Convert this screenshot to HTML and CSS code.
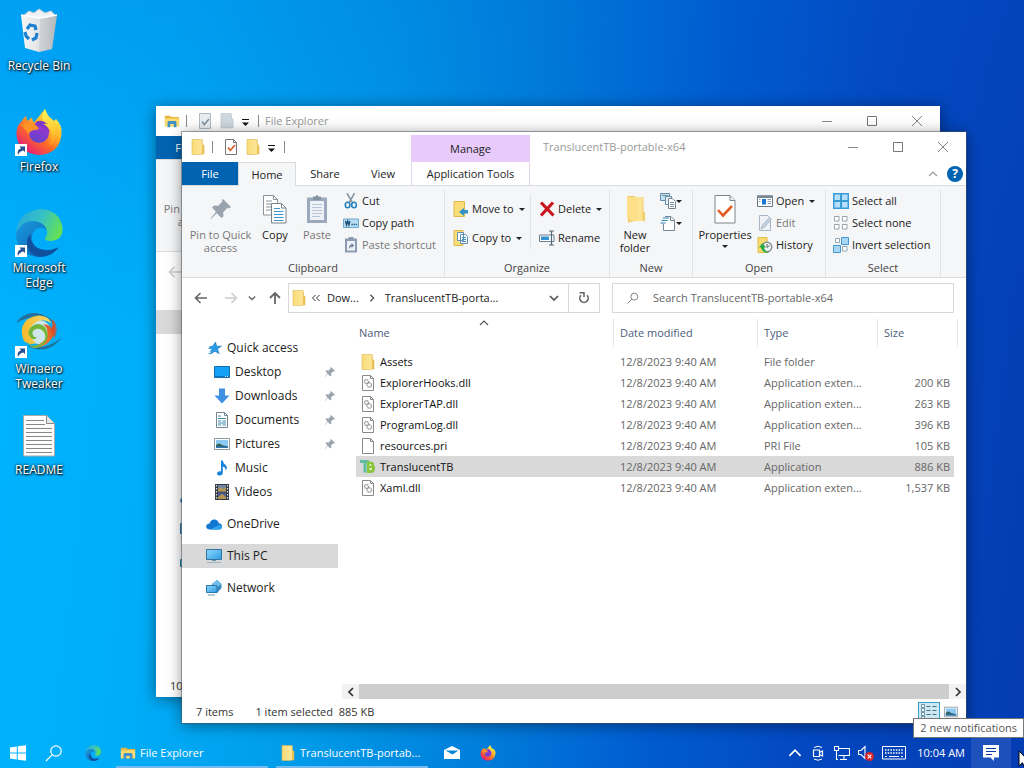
FILE: index.html
```
<!DOCTYPE html>
<html lang="en">
<head>
<meta charset="utf-8">
<title>Desktop</title>
<link rel="stylesheet" href="styles.css">
</head>
<body>
<svg class="sprite" aria-hidden="true">
  <defs>
    <linearGradient id="gFolder" x1="0" y1="0" x2="1" y2="0"><stop offset="0" stop-color="#f8db78"/><stop offset=".75" stop-color="#fde596"/><stop offset="1" stop-color="#e9c45c"/></linearGradient>
    <linearGradient id="gFox" x1=".85" y1=".1" x2=".2" y2=".95"><stop offset="0" stop-color="#fff44f"/><stop offset=".35" stop-color="#ffb02a"/><stop offset=".6" stop-color="#ff6a26"/><stop offset="1" stop-color="#e3197b"/></linearGradient>
    <linearGradient id="gOrb" x1=".7" y1="0" x2=".3" y2="1"><stop offset="0" stop-color="#a932d0"/><stop offset="1" stop-color="#5c46cc"/></linearGradient>
    <linearGradient id="gFlame" x1=".5" y1="0" x2=".7" y2="1"><stop offset="0" stop-color="#fff157"/><stop offset=".6" stop-color="#ffc72d"/><stop offset="1" stop-color="#ff8a20"/></linearGradient>
    <linearGradient id="gEdgeTop" x1="0" y1=".3" x2="1" y2=".6"><stop offset="0" stop-color="#2ba9dc"/><stop offset=".5" stop-color="#35c1c4"/><stop offset="1" stop-color="#66e24e"/></linearGradient>
    <linearGradient id="gEdgeLow" x1="0" y1="0" x2="1" y2="1"><stop offset="0" stop-color="#1a9ade"/><stop offset="1" stop-color="#0a5cb0"/></linearGradient>
    <linearGradient id="gScreen" x1="0" y1="0" x2="1" y2="1"><stop offset="0" stop-color="#8ed8fb"/><stop offset="1" stop-color="#2d9be6"/></linearGradient>
    <linearGradient id="gBin" x1="0" y1="0" x2="1" y2="0"><stop offset="0" stop-color="#f6f7f8"/><stop offset=".6" stop-color="#dde0e2"/><stop offset="1" stop-color="#b4b9bd"/></linearGradient>
    <linearGradient id="gSwirl" x1="0" y1="0" x2="1" y2="0"><stop offset="0" stop-color="#f7b92c"/><stop offset="1" stop-color="#f3d86a"/></linearGradient>
    <linearGradient id="gSwirlHot" x1="1" y1="0" x2="0" y2="1"><stop offset="0" stop-color="#d9401c"/><stop offset="1" stop-color="#f7a440"/></linearGradient>
  </defs>
  <symbol id="folder" viewBox="0 0 16 16"><path d="M2 .5h10l.5 1v4l1.500.8V15H12l-.6.5H2z" fill="url(#gFolder)" stroke="#dcb955" stroke-width=".6"/><path d="M12.500 6l1.500.8V15h-2z" fill="#e8bf4d"/></symbol>
  <symbol id="ghost-folder" viewBox="0 0 16 16"><path d="M2 .5h10l.5 1v4l1.500.8V15H2z" fill="#cfd8df" stroke="#b5c0c9" stroke-width=".6"/></symbol>
  <symbol id="explorer" viewBox="0 0 18 16"><path d="M1 2h6l1.500 1.500H17V14H1z" fill="#e7b540"/><path d="M1 5h16v9H1z" fill="#fbdc72"/><path d="M4 15V9.500Q4 8 5.500 8h7Q14 8 14 9.500V15h-3v-3.500H7V15z" fill="#4092c8"/></symbol>
  <symbol id="check-page" viewBox="0 0 14 16"><path d="M1.500.5h8l3 3v12h-11z" fill="#fff" stroke="#777"/><path d="M9.500.5v3h3" fill="none" stroke="#777"/><path d="M4 8.500l2.300 3L11 6" fill="none" stroke="#d9622b" stroke-width="1.700"/></symbol>
  <symbol id="ghost-check" viewBox="0 0 14 16"><path d="M1.500.5h11v15h-11z" fill="#e8edf2" stroke="#b0bac2"/><path d="M4 8.500l2.300 3L11 6" fill="none" stroke="#7e8d9f" stroke-width="1.500"/></symbol>
  <symbol id="bar-menu" viewBox="0 0 9 9"><path d="M1 1.500h7" stroke="#111"/><path d="M1 4.500h7L4.500 8z" fill="#111"/></symbol>
  <symbol id="min" viewBox="0 0 12 12"><path d="M1 6.500h10" stroke="#888"/></symbol>
  <symbol id="max" viewBox="0 0 12 12"><path d="M1.500 1.500h9v9h-9z" fill="none" stroke="#777"/></symbol>
  <symbol id="close" viewBox="0 0 12 12"><path d="M1 1l10 10M11 1L1 11" stroke="#808080" fill="none"/></symbol>
  <symbol id="pin" viewBox="0 0 24 24"><path d="M14 2l8 8-2 1.500-1.500-.8-4.300 4.500.3 4-2 1.800-4.800-4.800L2 22l-.4-.6L7 14.800 3 10.500 5 8.600l4.200.2 4.300-4.600-.8-1.200z" fill="#9aa4af"/></symbol>
  <symbol id="copy" viewBox="0 0 26 30"><path d="M1.500 1.500h10l4 4V21h-14z" fill="#fff" stroke="#8b949c"/><path d="M11.500 1.500v4h4M4 7h6M4 10h8M4 13h8M4 16h8" fill="none" stroke="#8b949c"/><path d="M9.500 9.500h10l4.500 4.500v15h-14.500z" fill="#fff" stroke="#78838c"/><path d="M19.500 9.500V14H24" fill="none" stroke="#78838c"/><path d="M12 14.500h6M12 17.500h9.500M12 20.500h9.500M12 23.500h9.500M12 26.500h9.500" stroke="#3d94cf"/></symbol>
  <symbol id="paste" viewBox="0 0 22 30"><path d="M1 3.500h20V29H1z" fill="#9ba9bd"/><path d="M4 7h14v19H4z" fill="#edf2f8"/><path d="M7 2.500h2.500Q11-.5 12.500 2.500H15V6H7z" fill="#8492a4"/><path d="M6 10.500h10M6 13.500h10M6 16.500h10M6 19.500h10M6 22.500h8" stroke="#bac6d4"/></symbol>
  <symbol id="cut" viewBox="0 0 16 16"><path d="M4 0l5.500 10M11.500 0L6 10" stroke="#8b98a2" stroke-width="1.600"/><ellipse cx="4.600" cy="12" rx="2.300" ry="2.800" fill="none" stroke="#2583bd" stroke-width="1.600"/><ellipse cx="11" cy="12" rx="2.300" ry="2.800" fill="none" stroke="#2583bd" stroke-width="1.600"/></symbol>
  <symbol id="copy-path" viewBox="0 0 16 16"><path d="M.5 4h15v8.500H.5z" fill="#b7def5" stroke="#6ca9cf"/><path d="M2.500 6l1 4 1.200-4 1.200 4 1-4" fill="none" stroke="#174d73" stroke-width="1.300"/><path d="M8.500 9.500h1.200M10.700 9.500h1.200M12.900 9.500h1.200" stroke="#174d73" stroke-width="1.400"/></symbol>
  <symbol id="paste-shortcut" viewBox="0 0 16 16"><path d="M2 1.500h12V15.500H2z" fill="#8d9bb0"/><path d="M4 4h8v9.500H4z" fill="#eef2f8"/><path d="M5.500 0h5v3h-5z" fill="#8d9bb0"/><path d="M6 12q-.5-4 2.500-4.500V6l2.700 2.500L8.500 11V9.500Q7 9.500 6 12z" fill="#6e809a"/></symbol>
  <symbol id="move" viewBox="0 0 16 16"><path d="M1 .5h10.500V15.500H1z" fill="#fbdd77" stroke="#e0b94e"/><path d="M15 9h-4V6.800L6 11l5 4v-2.500h4z" fill="#3391c6"/></symbol>
  <symbol id="copy-to" viewBox="0 0 16 16"><path d="M1 .5h9V15.500H1z" fill="#fbdd77" stroke="#e0b94e"/><path d="M4.500 2.500h6v8h-6zM7.500 4.500h5l2 2v7h-7z" fill="#fff" stroke="#5d91b5"/><path d="M9 7.500h4M9 9.500h4M9 11.500h4" stroke="#438fc2"/></symbol>
  <symbol id="delete" viewBox="0 0 16 16"><path d="M2 1.500l12.500 13M14 1.500l-12 13" stroke="#c9151e" stroke-width="3.200"/></symbol>
  <symbol id="rename" viewBox="0 0 16 16"><path d="M.5 5h14.500v6.500H.5z" fill="#fff" stroke="#6d7f8c"/><path d="M2 6.500h8v3.500H2z" fill="#3593d3"/><path d="M10 1h5M12.500 1v14M10 15h5" stroke="#526879" stroke-width="1.200"/></symbol>
  <symbol id="new-folder" viewBox="0 0 22 30"><path d="M3 2h8v25l-7 1.500z" fill="#edc766"/><path d="M5 3h14.500v14l1.500 2v8H5z" fill="url(#gFolder)"/><path d="M3 2l7 3v21l-7-2z" fill="#ffe08a"/></symbol>
  <symbol id="new-item" viewBox="0 0 16 16"><path d="M.5.500h9v7h-9z" fill="#c2e2f3" stroke="#668da7"/><path d="M5.500 3.500h6v8h-6z" fill="#e8f3f9" stroke="#668da7"/><path d="M8.500 5.500h4l3 3v7h-7z" fill="#fff" stroke="#728493"/><path d="M10 9.500h4M10 11.500h4M10 13.500h4M2 2.500h6" stroke="#7893a4"/></symbol>
  <symbol id="easy-access" viewBox="0 0 16 16"><path d="M5 1.500h6l3.500 3.500v10.500H3.500V9" fill="#fff" stroke="#748899"/><path d="M10.500 1.500v4h4" fill="none" stroke="#748899"/><path d="M3 3h6M1.500 5.500h6M.5 8h5" stroke="#2c80b8" stroke-width="1.200"/></symbol>
  <symbol id="properties" viewBox="0 0 22 30"><path d="M1 1.500h15l5 5V29H1z" fill="#fff" stroke="#7b858d"/><path d="M16 1.500v5h5" fill="#eee" stroke="#7b858d"/><path d="M4 16l5 5.500L18 12" fill="none" stroke="#e15d25" stroke-width="2.600"/></symbol>
  <symbol id="open" viewBox="0 0 16 16"><path d="M.5 3h15v10.500H.5z" fill="#fff" stroke="#687984"/><path d="M0 2.500h16V5H0z" fill="#758794"/><path d="M5 6h4v5.500H5z" fill="#1874cf"/><path d="M10.500 6.500H14M10.500 8.500H14M10.500 10.500H14M2 6.500h1.500M2 8.500h1.500" stroke="#8c9caa"/></symbol>
  <symbol id="edit" viewBox="0 0 16 16"><path d="M2.500.500h8l3 3v12h-11z" fill="#eef2f7" stroke="#aab6c4"/><path d="M4 14l1.500-4 7-7.500 2 2-7 7.500z" fill="#c7d3e1" stroke="#93a5b8" stroke-width=".7"/></symbol>
  <symbol id="history" viewBox="0 0 16 16"><path d="M1 .5h9V15.500H1z" fill="#f8dc70" stroke="#e1bd4c"/><circle cx="10" cy="10" r="4.800" fill="#edf0f0" stroke="#708287" stroke-width="1.200"/><path d="M10 7v3.500l2.500-2" fill="none" stroke="#56646b"/><path d="M12.500 15.500q-7.500 1-8.500-5H2L5.500 6 9 10.500H7q.5 3.800 5.500 5z" fill="#28a745"/></symbol>
  <symbol id="select-all" viewBox="0 0 16 16"><path d="M0 0h16v16H0z" fill="#3a9bd9"/><path d="M1.500 1.500h5.500v5.500H1.500zM9 1.500h5.500v5.500H9zM1.500 9h5.500v5.500H1.500zM9 9h5.500v5.500H9z" fill="#b5e0fa"/></symbol>
  <symbol id="select-none" viewBox="0 0 16 16"><path d="M1.500 1.500h4.500v4.500H1.500zM9.500 1.500h4.500v4.500H9.500zM1.500 9.500h4.500v4.500H1.500zM9.500 9.500h4.500v4.500H9.500z" fill="#fff" stroke="#98a3ab"/></symbol>
  <symbol id="select-inv" viewBox="0 0 16 16"><path d="M2.500 1.500h4v4h-4zM9.500 9.500h4.500v4.500H9.500z" fill="#fff" stroke="#91a6b5"/><path d="M8.500.5h7v7h-7zM.5 8.500h7v7h-7z" fill="#a8d6f6" stroke="#4597cd"/></symbol>
  <symbol id="arrow-left" viewBox="0 0 14 14"><path d="M13 7H2M6.500 2L1.500 7l5 5" fill="none" stroke="currentColor" stroke-width="1.600"/></symbol>
  <symbol id="arrow-right" viewBox="0 0 14 14"><path d="M1 7h11M7.500 2l5 5-5 5" fill="none" stroke="currentColor" stroke-width="1.600"/></symbol>
  <symbol id="arrow-up" viewBox="0 0 14 14"><path d="M7 13V2M2 7l5-5 5 5" fill="none" stroke="currentColor" stroke-width="1.800"/></symbol>
  <symbol id="chev-down" viewBox="0 0 10 10"><path d="M1 3l4 4 4-4" fill="none" stroke="currentColor" stroke-width="1.700"/></symbol>
  <symbol id="chev-up" viewBox="0 0 10 10"><path d="M1 7l4-4 4 4" fill="none" stroke="currentColor" stroke-width="1.200"/></symbol>
  <symbol id="chev-right" viewBox="0 0 10 10"><path d="M3 1l4 4-4 4" fill="none" stroke="currentColor" stroke-width="1.700"/></symbol>
  <symbol id="chev-left" viewBox="0 0 10 10"><path d="M7 1L3 5l4 4" fill="none" stroke="currentColor" stroke-width="1.700"/></symbol>
  <symbol id="chevs" viewBox="0 0 10 10"><path d="M4.500 2l-3 3 3 3M8.500 2l-3 3 3 3" fill="none" stroke="#333"/></symbol>
  <symbol id="refresh" viewBox="0 0 14 14"><path d="M10 4.200A4.200 4.200 0 1 1 4 4.200" fill="none" stroke="#666" stroke-width="1.600"/><path d="M2.500 1.800H7V6.300" fill="none" stroke="#666" stroke-width="1.500"/></symbol>
  <symbol id="search" viewBox="0 0 18 18"><circle cx="11" cy="7" r="5.200" fill="none" stroke="currentColor" stroke-width="1.200"/><path d="M7.300 10.700L1 17" stroke="currentColor" stroke-width="1.200"/></symbol>
  <symbol id="star" viewBox="0 0 16 16"><path d="M9.500 2l1.200 4.300 4.800-.2-4 2.900 1.600 4.700-4.100-2.500-4.500 2.700 1.400-4.600L3.300 7l3.500-.9z" fill="#2b9be8" stroke="#1579bd" stroke-width=".6"/><path d="M2.500 8.500h3M3.500 11h2M2.500 13.500h2" stroke="#2b9be8"/></symbol>
  <symbol id="desk" viewBox="0 0 16 16"><path d="M.5 2.500h15v11H.5z" fill="#13a1f5" stroke="#1271b5"/><path d="M1 12.500h14" stroke="#0872bd"/><path d="M11 12.500h1M13 12.500h1" stroke="#d5efff"/></symbol>
  <symbol id="down" viewBox="0 0 16 16"><path d="M5 .5h6v7h4.500L8 15.500.5 7.500H5z" fill="#3e90e0"/></symbol>
  <symbol id="doc" viewBox="0 0 16 16"><path d="M2.500.500h8l3 3v12h-11z" fill="#fff" stroke="#76858f"/><path d="M4 4h3M4 6.500h8M4 9h3M8.500 9H12M4 11h8M4 13h3M8.500 13H12" stroke="#3d8fae" stroke-width="1.200"/><path d="M10.500.5v3h3" fill="none" stroke="#76858f"/></symbol>
  <symbol id="pics" viewBox="0 0 16 16"><path d="M.5 2.500h15v11H.5z" fill="#fff" stroke="#8c989f"/><path d="M2 4h12v8H2z" fill="#8ccaf3"/><path d="M2 9q3-3 6 0l6 1.500V12H2z" fill="#36605b"/><path d="M2 10.500h12V12H2z" fill="#2c77b8"/></symbol>
  <symbol id="music" viewBox="0 0 16 16"><path d="M7 .5h1.800Q9 3.500 12 5.500q2 2.200-.5 5 .3-3.500-2.700-4v6.300Q8.500 15.500 6 15.500q-3 0-3-2t3-2.300h1z" fill="#1883dc"/></symbol>
  <symbol id="video" viewBox="0 0 16 16"><path d="M1 0h14v16H1z" fill="#333944"/><path d="M4 1h8v6.500H4z" fill="#6f85a8"/><path d="M4 8.500h8V15H4z" fill="#4c608e"/><path d="M4 5l3-2 2 2 3-2v4.500H4zM4 13l4-3 4 3v2H4z" fill="#b59650"/><path d="M2.500 1v14M13.500 1v14" stroke="#dfe4ea" stroke-width="1.200" stroke-dasharray="1.500 1.500"/></symbol>
  <symbol id="cloud" viewBox="0 0 16 16"><path d="M3.500 13.500Q0 13 .2 10.300.8 7.500 3.500 7.500 5 3 9 3.500q3 .5 3.800 3.700 3.200.3 3.200 3.300t-3 3z" fill="#1277d0"/><path d="M4 13.500L13 9q3 .3 3 2.200-.3 2.300-3 2.300z" fill="#2da4f0"/></symbol>
  <symbol id="pc" viewBox="0 0 16 16"><path d="M.5 1.500h15v10H.5z" fill="url(#gScreen)" stroke="#33739d"/><path d="M1 14.500h14" stroke="#9bb4c5"/><path d="M6 12.500h4" stroke="#6e8b9e"/></symbol>
  <symbol id="net" viewBox="0 0 16 16"><path d="M11 0l4.500 4v4L11 13 6 9V4z" fill="#3688bd"/><path d="M11 0l4.500 4-4 3L6 4z" fill="#6ec0ea"/><path d="M.5 5.500h10.500v7H.5z" fill="url(#gScreen)" stroke="#2c77a5"/><path d="M2 15h7" stroke="#6e95ae"/></symbol>
  <symbol id="dll" viewBox="0 0 14 16"><path d="M1.500.5h8l3 3v12h-11z" fill="#fff" stroke="#8a8a8a"/><path d="M9.500.5v3h3" fill="none" stroke="#8a8a8a"/><circle cx="5.500" cy="6.500" r="2" fill="none" stroke="#8b9196" stroke-width="1.300" stroke-dasharray="1.300 .5"/><circle cx="8.300" cy="10" r="2.200" fill="none" stroke="#8b9196" stroke-width="1.300" stroke-dasharray="1.300 .5"/></symbol>
  <symbol id="blank" viewBox="0 0 14 16"><path d="M1.500.5h8l3 3v12h-11z" fill="#fff" stroke="#8a8a8a"/><path d="M9.500.5v3h3" fill="none" stroke="#8a8a8a"/></symbol>
  <symbol id="ttb" viewBox="0 0 16 16"><path d="M0 1h9v3H6.500v9.500h-3V4H0z" fill="#61bea1"/><path d="M7 2.500h4q3.500.5 3 3.700 1.800 1.300 1 4.300-1 3.500-4.500 3.500H7z" fill="#8bc53f"/><path d="M9.500 5h1.700v1.800H9.500zM9.500 9h2.200v2H9.500z" fill="#e7f6cf"/></symbol>
  <symbol id="fox" viewBox="0 0 48 48"><path d="M7 13q1-3 4-5 0 3 2 5 2-3 4-3.500 0 3 2 5L30 1q2 7 7 10l2 2 2-2q6 6 5.500 14-1 21-23 22Q3 45 1.500 27 1 18 7 13z" fill="url(#gFox)"/><path d="M30 1q2 7 8 12 8 9 8 14-2-5-6-8 3 15-6 19 7-13-4-22-5-5 0-15z" fill="url(#gFlame)"/><circle cx="24" cy="25" r="10" fill="url(#gOrb)"/><path d="M6 17q5-4 12-2l6 5q-1 2-5 2-5 1-5 5-3-5-8-10z" fill="#ff9226"/><path d="M20 15q5-5 13 1-3-1-5 0 6 3 7 9-4-6-12-7z" fill="#7b37c8"/></symbol>
  <symbol id="edge" viewBox="0 0 48 48"><path d="M1 25Q2 3 25 0q20 1 22.500 19Q48 31 36 32q-7 0-6-3 5-6-1-12Q17 8 1 25z" fill="url(#gEdgeTop)"/><path d="M1 24Q7 11 19 12q10 1 13 9-7-5-12 0-6 6-1 15 8 11 22 3-7 9-17 9Q1 46 1 24z" fill="url(#gEdgeLow)"/><path d="M16 25q-2 7 5 13 9 6 21 1l2-1q-7 10-20 10-12-4-12-14 0-6 4-9z" fill="#10509e"/></symbol>
  <symbol id="swirl" viewBox="0 0 48 48"><path d="M1 13Q10 0 26 4q9 3 14 10Q22 1 1 13zM47 27Q37 42 21 39q-5-1-9-4 18 7 35-8z" fill="#22719c"/><circle cx="24" cy="22" r="12" fill="#cfe6ea"/><path d="M36 8q8 12-1 23-9 9-20 6 12-2 16-9 4-9-3-14 6 1 8 6 3-5 0-12z" fill="url(#gSwirlHot)"/><path d="M38 9q7 10 1 20-2-10-9-15 5 1 7 4 2-4 1-9z" fill="#dd481f" opacity=".7"/><path d="M9 31Q3 17 13 9q9-6 18-2 4 2 5 6-8-5-15-1-8 5-5 14 1 4 5 7-7 3-12-2z" fill="url(#gSwirl)"/><path d="M10 30q6 8 14 5 8-4 6-11-3-6-9-5-5 2-3 6 1 3 4 2-2 4-6 1-5-5 0-11 7-6 14 0 6 9-1 17-10 9-19-4z" fill="#72b53b"/></symbol>
  <symbol id="bin" viewBox="0 0 48 48"><path d="M8 9l6-5 5 2 5-4 6 4 6-2 5 5-6 4H11z" fill="#eef1f3" stroke="#c4c9cd"/><path d="M6 8l19 3 17-3-5 34-13 3-14-4z" fill="url(#gBin)"/><path d="M25 11l17-3-5 34-13 3z" fill="#aeb5ba" opacity=".35"/><path d="M6 8l19 3 17-3" fill="none" stroke="#fff" stroke-width="1.500"/><path d="M12 22l3-4 5 1 1 4M22 26l-1 5-4 2M14 32l-3-3-1-4" fill="none" stroke="#1c7fd0" stroke-width="3.200"/></symbol>
  <symbol id="readme" viewBox="0 0 48 48"><path d="M8.500 4.500h23l8 8v32.500h-31z" fill="#fdfdfd" stroke="#aaa"/><path d="M31.500 4.500v8h8" fill="#e7e7e7" stroke="#888"/><path d="M11 9.500h18M11 13.500h19M11 17.500h26M11 21.500h26M11 25.500h26M11 29.500h26M11 33.500h26M11 37.500h26M11 41.500h26" stroke="#888"/></symbol>
  <symbol id="shortcut" viewBox="0 0 12 12"><path d="M0 0h12v12H0z" fill="#fff"/><path d="M3 11Q1.500 5.500 6 4.500L4.500 2.500H10v5.500L8.300 6.500Q4.500 7 3 11z" fill="#255293"/></symbol>
  <symbol id="win" viewBox="0 0 16 16"><path d="M0 2.500l6.800-1v6H0zM7.800 1.300L16 .200v7.300H7.800zM0 8.500h6.800v6L0 13.500zM7.800 8.500H16v7.300l-8.200-1.100z" fill="#fff"/></symbol>
  <symbol id="mail" viewBox="0 0 16 16"><path d="M0 5l8-4 8 4v9H0z" fill="#fff"/><path d="M1.500 5.500h13L8.500 9.500z" fill="#0786d7"/></symbol>
  <symbol id="meet" viewBox="0 0 16 16"><path d="M3.500 5h6v6.500h-6zM9.500 7.500l3-1.500v5l-3-1.500" fill="none" stroke="#fff" stroke-width="1.200"/><path d="M4 2.500q4-2.500 8 0M4 14q4 2.500 8 0" fill="none" stroke="#fff"/></symbol>
  <symbol id="lan" viewBox="0 0 16 16"><path d="M4.500 3.500h11v7h-11M10 10.500v4M6 14.500h7M.5 1.500h4v4h-4zM2.500 5.500v9H4" fill="none" stroke="#fff" stroke-width="1.100"/></symbol>
  <symbol id="mute" viewBox="0 0 16 16"><path d="M.5 5.500h2.500l4-4v12l-4-4H.5z" fill="none" stroke="#fff" stroke-width="1.100"/><circle cx="11.500" cy="11.500" r="4.500" fill="#d7222e"/><path d="M9.700 9.700l3.600 3.600M13.300 9.700l-3.600 3.600" stroke="#fff" stroke-width="1.200"/></symbol>
  <symbol id="keys" viewBox="0 0 24 14"><path d="M.5.500h23v12.500H.5z" fill="none" stroke="#fff"/><path d="M3 4h18M3 7h18" stroke="#fff" stroke-width="1.400" stroke-dasharray="1.500 1.200"/><path d="M3 10.500h2M7 10.500h10M19 10.500h2" stroke="#fff"/></symbol>
  <symbol id="note" viewBox="0 0 16 16"><path d="M0 0h16v12.500h-5V16l-3.500-3.500H0z" fill="#fff"/><path d="M3 3.500h10M3 6.500h10M3 9.500h6" stroke="#0a3da5" stroke-width="1.200"/></symbol>
  <symbol id="details" viewBox="0 0 16 16"><path d="M.5.500h3v3h-3zM.5 4.500h3v3h-3zM.5 8.500h3v3h-3zM.5 12.500h3v3h-3z" fill="#fff" stroke="#6b91a4"/><path d="M5.500 2.500h4M11.500 2.500h4M5.500 6.500h4M11.500 6.500h4M5.500 10.500h4M11.500 10.500h4M5.500 14.500h4M11.500 14.500h4" stroke="#466d82"/></symbol>
</svg>

<main class="desktop">
  <nav class="shortcuts" aria-label="Desktop icons">
    <a class="shortcut" href="#bin"><span class="art"><svg><use href="#bin"/></svg></span>Recycle Bin</a>
    <a class="shortcut" href="#fox"><span class="art"><svg><use href="#fox"/></svg><svg class="badge"><use href="#shortcut"/></svg></span>Firefox</a>
    <a class="shortcut" href="#edge"><span class="art"><svg><use href="#edge"/></svg><svg class="badge"><use href="#shortcut"/></svg></span>Microsoft Edge</a>
    <a class="shortcut" href="#swirl"><span class="art"><svg><use href="#swirl"/></svg><svg class="badge"><use href="#shortcut"/></svg></span>Winaero Tweaker</a>
    <a class="shortcut" href="#readme"><span class="art"><svg><use href="#readme"/></svg></span>README</a>
  </nav>

  <section class="window window-back" aria-label="File Explorer">
    <header class="titlebar">
      <div class="quick">
        <svg class="i16"><use href="#explorer"/></svg><span class="bar"></span>
        <svg class="i16"><use href="#ghost-check"/></svg><svg class="i16"><use href="#ghost-folder"/></svg><svg class="i9"><use href="#bar-menu"/></svg><span class="bar"></span>
      </div>
      <h2 class="title">File Explorer</h2>
      <div class="controls">
        <button aria-label="Minimize"><svg><use href="#min"/></svg></button><button aria-label="Maximize"><svg><use href="#max"/></svg></button><button aria-label="Close"><svg><use href="#close"/></svg></button>
      </div>
    </header>
    <div class="tabs"><button class="tab file">File</button></div>
    <div class="ribbon"><div class="group"><div class="tools"><button class="big dim pinbig"><svg class="i24"></svg><span>Pin to Quick access</span></button></div></div></div>
    <div class="address"><button class="ar faint" aria-label="Back"><svg class="i14"><use href="#arrow-left"/></svg></button></div>
    <div class="content">
      <div class="tree">
        <div class="node current"></div>
        <div class="spacer"></div>
        <div class="node"><svg class="i16"><use href="#cloud"/></svg></div>
        <div class="node top"><svg class="i16"><use href="#pc"/></svg></div>
        <div class="node top"><svg class="i16"><use href="#net"/></svg></div>
      </div>
    </div>
    <footer class="status"><span>10 items</span></footer>
  </section>

  <section class="window window-front" aria-label="TranslucentTB-portable-x64">
    <header class="titlebar">
      <div class="quick">
        <svg class="i16"><use href="#folder"/></svg><span class="bar"></span>
        <svg class="i16"><use href="#check-page"/></svg><svg class="i16"><use href="#folder"/></svg><svg class="i9"><use href="#bar-menu"/></svg><span class="bar"></span>
      </div>
      <div class="manage">Manage</div>
      <h2 class="title">TranslucentTB-portable-x64</h2>
      <div class="controls">
        <button aria-label="Minimize"><svg><use href="#min"/></svg></button><button aria-label="Maximize"><svg><use href="#max"/></svg></button><button aria-label="Close"><svg><use href="#close"/></svg></button>
      </div>
    </header>
    <div class="tabs">
      <button class="tab file">File</button><button class="tab active">Home</button><button class="tab">Share</button><button class="tab">View</button><button class="tab context">Application Tools</button>
      <div class="tab-end"><button class="collapse" aria-label="Collapse ribbon"><svg class="i10"><use href="#chev-up"/></svg></button><button class="help">?</button></div>
    </div>
    <div class="ribbon">
      <div class="group g-clip">
        <div class="tools">
          <button class="big dim pinbig"><svg class="i24"><use href="#pin"/></svg><span>Pin to Quick access</span></button>
          <button class="big copybig"><svg class="tall"><use href="#copy"/></svg><span>Copy</span></button>
          <button class="big dim pastebig"><svg class="tall"><use href="#paste"/></svg><span>Paste</span></button>
          <div class="stack">
            <button class="small"><svg class="i16"><use href="#cut"/></svg>Cut</button>
            <button class="small"><svg class="i16"><use href="#copy-path"/></svg>Copy path</button>
            <button class="small dim"><svg class="i16"><use href="#paste-shortcut"/></svg>Paste shortcut</button>
          </div>
        </div>
        <div class="caption">Clipboard</div>
      </div>
      <div class="group g-org">
        <div class="tools">
          <div class="stack wide first">
            <button class="small drop"><svg class="i16"><use href="#move"/></svg>Move to</button>
            <button class="small drop"><svg class="i16"><use href="#copy-to"/></svg>Copy to</button>
          </div>
          <div class="stack wide">
            <button class="small drop"><svg class="i16"><use href="#delete"/></svg>Delete</button>
            <button class="small"><svg class="i16"><use href="#rename"/></svg>Rename</button>
          </div>
        </div>
        <div class="caption">Organize</div>
      </div>
      <div class="group g-new">
        <div class="tools">
          <button class="big newbig"><svg class="tall"><use href="#new-folder"/></svg><span>New folder</span></button>
          <div class="stack">
            <button class="small drop bare" aria-label="New item"><svg class="i16"><use href="#new-item"/></svg></button>
            <button class="small drop bare" aria-label="Easy access"><svg class="i16"><use href="#easy-access"/></svg></button>
          </div>
        </div>
        <div class="caption">New</div>
      </div>
      <div class="group g-open">
        <div class="tools">
          <button class="big propbig drop"><svg class="tall"><use href="#properties"/></svg><span>Properties</span></button>
          <div class="stack">
            <button class="small drop"><svg class="i16"><use href="#open"/></svg>Open</button>
            <button class="small dim"><svg class="i16"><use href="#edit"/></svg>Edit</button>
            <button class="small"><svg class="i16"><use href="#history"/></svg>History</button>
          </div>
        </div>
        <div class="caption">Open</div>
      </div>
      <div class="group g-sel">
        <div class="tools">
          <div class="stack">
            <button class="small"><svg class="i16"><use href="#select-all"/></svg>Select all</button>
            <button class="small"><svg class="i16"><use href="#select-none"/></svg>Select none</button>
            <button class="small"><svg class="i16"><use href="#select-inv"/></svg>Invert selection</button>
          </div>
        </div>
        <div class="caption">Select</div>
      </div>
    </div>
    <div class="address">
      <button class="ar" aria-label="Back"><svg class="i14"><use href="#arrow-left"/></svg></button>
      <button class="ar faint" aria-label="Forward"><svg class="i14"><use href="#arrow-right"/></svg></button>
      <button class="ar thin" aria-label="Recent"><svg class="i8"><use href="#chev-down"/></svg></button>
      <button class="ar up" aria-label="Up"><svg class="i14"><use href="#arrow-up"/></svg></button>
      <div class="path">
        <svg class="i16"><use href="#folder"/></svg>
        <svg class="i10"><use href="#chevs"/></svg>
        <button class="crumb">Dow...</button>
        <svg class="i8"><use href="#chev-right"/></svg>
        <button class="crumb">TranslucentTB-porta...</button>
        <button class="history" aria-label="Previous locations"><svg class="i10"><use href="#chev-down"/></svg></button>
        <button class="refresh" aria-label="Refresh"><svg class="i14"><use href="#refresh"/></svg></button>
      </div>
      <label class="find"><svg class="i12"><use href="#search"/></svg><input type="text" aria-label="Search" placeholder="Search TranslucentTB-portable-x64"></label>
    </div>
    <div class="content">
      <nav class="tree" aria-label="Folders">
        <a class="node" href="#q"><svg class="i16"><use href="#star"/></svg>Quick access</a>
        <a class="node sub" href="#d"><svg class="i16"><use href="#desk"/></svg>Desktop<svg class="pin"><use href="#pin"/></svg></a>
        <a class="node sub" href="#l"><svg class="i16"><use href="#down"/></svg>Downloads<svg class="pin"><use href="#pin"/></svg></a>
        <a class="node sub" href="#o"><svg class="i16"><use href="#doc"/></svg>Documents<svg class="pin"><use href="#pin"/></svg></a>
        <a class="node sub" href="#p"><svg class="i16"><use href="#pics"/></svg>Pictures<svg class="pin"><use href="#pin"/></svg></a>
        <a class="node sub" href="#m"><svg class="i16"><use href="#music"/></svg>Music</a>
        <a class="node sub" href="#v"><svg class="i16"><use href="#video"/></svg>Videos</a>
        <a class="node top" href="#c"><svg class="i16"><use href="#cloud"/></svg>OneDrive</a>
        <a class="node top current" href="#t"><svg class="i16"><use href="#pc"/></svg>This PC</a>
        <a class="node top" href="#n"><svg class="i16"><use href="#net"/></svg>Network</a>
      </nav>
      <div class="listing">
        <div class="scroller">
          <table class="files">
            <colgroup><col><col class="c-date"><col class="c-type"><col class="c-size"></colgroup>
            <thead><tr><th><span class="sorted">Name<svg class="sort"><use href="#chev-up"/></svg></span></th><th>Date modified</th><th>Type</th><th>Size</th></tr></thead>
            <tbody>
              <tr><td><span class="name"><svg class="i16"><use href="#folder"/></svg>Assets</span></td><td>12/8/2023 9:40 AM</td><td>File folder</td><td></td></tr>
              <tr><td><span class="name"><svg class="i16"><use href="#dll"/></svg>ExplorerHooks.dll</span></td><td>12/8/2023 9:40 AM</td><td>Application exten...</td><td>200 KB</td></tr>
              <tr><td><span class="name"><svg class="i16"><use href="#dll"/></svg>ExplorerTAP.dll</span></td><td>12/8/2023 9:40 AM</td><td>Application exten...</td><td>263 KB</td></tr>
              <tr><td><span class="name"><svg class="i16"><use href="#dll"/></svg>ProgramLog.dll</span></td><td>12/8/2023 9:40 AM</td><td>Application exten...</td><td>396 KB</td></tr>
              <tr><td><span class="name"><svg class="i16"><use href="#blank"/></svg>resources.pri</span></td><td>12/8/2023 9:40 AM</td><td>PRI File</td><td>105 KB</td></tr>
              <tr class="selected"><td><span class="name"><svg class="i16"><use href="#ttb"/></svg>TranslucentTB</span></td><td>12/8/2023 9:40 AM</td><td>Application</td><td>886 KB</td></tr>
              <tr><td><span class="name"><svg class="i16"><use href="#dll"/></svg>Xaml.dll</span></td><td>12/8/2023 9:40 AM</td><td>Application exten...</td><td>1,537 KB</td></tr>
            </tbody>
          </table>
        </div>
        <div class="hscroll"><button aria-label="Scroll left"><svg class="i10"><use href="#chev-left"/></svg></button><div class="thumb"></div><button aria-label="Scroll right"><svg class="i10"><use href="#chev-right"/></svg></button></div>
      </div>
    </div>
    <footer class="status">
      <span>7 items</span><span>1 item selected&nbsp; 885 KB</span>
      <div class="views"><button class="view on" aria-label="Details"><svg class="i16"><use href="#details"/></svg></button><button class="view" aria-label="Large icons"><svg class="i14"><use href="#pics"/></svg></button></div>
    </footer>
  </section>

  <footer class="taskbar">
    <button class="t-icon" aria-label="Start"><svg class="i16"><use href="#win"/></svg></button>
    <button class="t-icon" aria-label="Search"><svg class="i18"><use href="#search"/></svg></button>
    <button class="t-icon t-edge" aria-label="Edge"><svg class="i16"><use href="#edge"/></svg></button>
    <button class="task"><svg class="i16"><use href="#explorer"/></svg>File Explorer</button>
    <button class="task"><svg class="i16"><use href="#folder"/></svg>TranslucentTB-portab...</button>
    <button class="t-icon" aria-label="Mail"><svg class="i16"><use href="#mail"/></svg></button>
    <button class="t-icon" aria-label="Firefox"><svg class="i16"><use href="#fox"/></svg></button>
    <div class="tray">
      <button aria-label="Hidden icons"><svg class="i14"><use href="#chev-up"/></svg></button>
      <button aria-label="Meet now"><svg class="i16"><use href="#meet"/></svg></button>
      <button aria-label="Network"><svg class="i16"><use href="#lan"/></svg></button>
      <button aria-label="Volume"><svg class="i16"><use href="#mute"/></svg></button>
      <button aria-label="Keyboard"><svg class="keys"><use href="#keys"/></svg></button>
      <time>10:04 AM</time>
      <button class="notify" aria-label="Notifications"><svg class="i16"><use href="#note"/></svg></button>
    </div>
  </footer>
  <div class="tooltip" role="tooltip">2 new notifications</div>
  <svg class="cursor" viewBox="0 0 12 19"><path d="M1 1v15l3.500-3.300 2.300 5.300 2.400-1-2.300-5.200H11.500z" fill="#fff" stroke="#000"/></svg>
</main>
</body>
</html>
```
FILE: styles.css
```
* { box-sizing: border-box; }

body {
  margin: 0;
  font: 11px/16px "Open Sans", "Noto Sans", sans-serif;
  color: #222;
}

button, input {
  font: inherit;
  color: inherit;
  border: 0;
  padding: 0;
  background: none;
}

a { color: inherit; text-decoration: none; }
svg { flex: none; display: block; }

.sprite { position: absolute; width: 0; height: 0; }
.i8 { width: 8px; height: 8px; }
.i9 { width: 9px; height: 9px; }
.i10 { width: 10px; height: 10px; }
.i12 { width: 12px; height: 12px; }
.i14 { width: 14px; height: 14px; }
.i16 { width: 16px; height: 16px; }
.i18 { width: 18px; height: 18px; }
.i24 { width: 24px; height: 24px; }
.tall { width: 26px; height: 30px; }
.keys { width: 24px; height: 14px; }

.desktop {
  position: relative;
  height: 100vh;
  min-height: 560px;
  overflow: hidden;
  display: flex;
  flex-direction: column;
  justify-content: space-between;
  background:
    linear-gradient(180deg, rgba(0, 80, 200, .2) 0%, rgba(0, 80, 200, 0) 45%),
    linear-gradient(97deg, #00b4ff 0%, #00aef8 18%, #009ae8 36%, #0080dc 50%, #005cd0 66%, #0448c0 80%, #043cb2 100%);
}

/* Desktop icons */
.shortcuts { width: 78px; padding-top: 7px; }
.shortcut {
  height: 101px;
  display: flex;
  flex-direction: column;
  align-items: center;
  gap: 3px;
  padding: 0 8px;
  font-size: 12px;
  line-height: 15px;
  text-align: center;
  color: #fff;
  text-shadow: 1px 1px 2px #000, 0 0 3px #000;
}
.shortcut:first-child { padding: 0; }
.art { position: relative; width: 48px; height: 48px; }
.art svg { width: 48px; height: 48px; }
.art .badge { position: absolute; left: 0; bottom: 0; width: 12px; height: 12px; }

/* Windows */
.window {
  position: absolute;
  display: flex;
  flex-direction: column;
  background: #fff;
  outline: 1px solid rgba(70, 80, 90, .5);
  box-shadow: 0 2px 14px rgba(0, 0, 0, .45);
}
.window-back { inset: 106px 84px 71px 156px; overflow: hidden; outline: 0; }
.window-front { inset: 132px 58px 45px 182px; }

.titlebar { display: flex; height: 30px; flex: none; }
.quick { width: 229px; height: 30px; display: flex; align-items: center; padding-left: 8px; }
.quick .bar { flex: none; width: 1px; height: 12px; background: #888; margin: 0 10px 0 6px; }
.quick .bar:last-child { margin-right: 0; }
.quick .i16 + .i16 { margin-left: 6px; }
.quick .i9 { margin: 2px 2px 0 6px; }
.window-back .quick { width: 109px; }
.manage {
  width: 119px;
  margin-top: 3px;
  background: #e8cbfa;
  text-align: center;
  line-height: 28px;
}
.title { margin: 0; font: inherit; line-height: 30px; color: #999; padding-left: 13px; flex: 1; }
.window-back .title { padding-left: 0; }
.controls { display: flex; gap: 33px; padding-right: 17px; align-items: center; }
.controls svg { width: 12px; height: 12px; }

.tabs { display: flex; height: 24px; flex: none; border-bottom: 1px solid #dadbdc; }
.tab { width: 58px; height: 24px; border: 1px solid transparent; }
.tab.file { width: 56px; background: #0063b1; color: #fff; height: 23px; }
.tab.active { background: #f5f6f7; border-color: #dadbdc; border-bottom: 0; }
.tab.context { width: 119px; border-color: transparent #e3d6ea; margin-left: -1px; }
.tab-end { margin-left: auto; display: flex; align-items: center; gap: 9px; padding-right: 3px; color: #999; }
.help { width: 16px; height: 16px; border-radius: 50%; background: #0063b1; color: #fff; font-size: 12px; font-weight: 700; line-height: 15px; }

.ribbon { display: flex; height: 92px; flex: none; background: #f5f6f7; border-bottom: 1px solid #dadbdc; }
.group { display: flex; flex-direction: column; border-right: 1px solid #e2e3e4; margin-top: 3px; }
.g-clip { width: 263px; }
.g-org { width: 165px; }
.g-new { width: 83px; }
.g-open { width: 133px; }
.g-sel { width: 115px; }
.tools { flex: 1; display: flex; padding-top: 1px; }
.caption { height: 17px; line-height: 16px; text-align: center; color: #444; }
.dim { color: #777; }

.big { display: flex; flex-direction: column; align-items: center; line-height: 13px; padding-top: 4px; gap: 4px; height: 66px; }
.big .i24 { margin: 3px 0; }
.pinbig { width: 77px; padding-left: 5px; padding-right: 5px; }
.copybig { width: 32px; }
.pastebig { width: 52px; }
.newbig { width: 50px; }
.propbig { width: 64px; }
.propbig::after { content: ""; border: 3px solid transparent; border-top-color: #222; border-bottom: 0; }

.stack { display: flex; flex-direction: column; }
.stack.wide { padding: 8px 0 0 8px; gap: 7px; }
.stack.wide.first { width: 86px; position: relative; }
.stack.wide.first::after { content: ""; position: absolute; right: 0; top: 4px; height: 55px; border-right: 1px solid #e2e3e4; }
.small { display: flex; align-items: center; gap: 3px; height: 22px; white-space: nowrap; }
.small.drop::after { content: ""; margin-left: 2px; border: 3px solid transparent; border-top-color: #222; border-bottom: 0; }
.small.bare { gap: 0; }
.small.bare::after { margin-left: 0; }
.g-sel .stack { padding-left: 7px; }

.address { display: flex; height: 41px; flex: none; align-items: center; padding: 0 12px 1px; color: #666; }
.ar { width: 14px; margin-right: 16px; }
.ar.thin { width: 8px; margin: 0 12px 0 -6px; }
.ar.up { margin: 0 6px 0 0; }
.faint { color: #ccc; }
.path { flex: 1 1 312px; display: flex; align-items: center; height: 30px; border: 1px solid #d9d9d9; padding-left: 2px; color: #222; }
.path > .i10 { margin: 0 6px 0 4px; }
.path > .i8 { margin: 0 9px; color: #555; }
.path .history { margin-left: auto; padding: 0 9px; color: #555; }
.path .refresh { align-self: stretch; padding: 0 8px; border-left: 1px solid #d9d9d9; }
.find { flex: 1 1 342px; margin-left: 12px; height: 30px; display: flex; align-items: center; gap: 14px; padding-left: 14px; border: 1px solid #d9d9d9; }
.find input { flex: 1; min-width: 0; outline: 0; }
.find input::placeholder { color: #666; opacity: 1; }

.content { flex: 1; min-height: 0; display: flex; }
.tree { width: 156px; padding-top: 17px; flex: none; font-size: 12px; }
.node { display: flex; align-items: center; height: 24px; padding-left: 24px; gap: 5px; }
.node.sub { padding-left: 32px; }
.node.top { margin-top: 8px; }
.current { background: #d9d9d9; }
.spacer { height: 152px; }
.pin { width: 12px; height: 12px; margin: 0 2px 0 auto; }

.listing { flex: 1; min-width: 0; display: flex; flex-direction: column; margin-left: 4px; }
.scroller { flex: 1; min-height: 0; overflow: hidden; padding: 0 8px 0 14px; }
.files { width: 100%; table-layout: fixed; border-spacing: 0; color: #666; }
.c-date { width: 144px; }
.c-type { width: 120px; }
.c-size { width: 80px; }
.files th { height: 28px; padding: 0 0 0 6px; font-weight: 400; text-align: left; color: #4c607a; border-right: 1px solid #e8e8e8; }
.files th:first-child { padding-left: 3px; }
.sorted { display: flex; position: relative; }
.sort { position: absolute; width: 10px; height: 10px; left: 120px; top: -7px; color: #555; }
.files tbody::before { content: ""; display: block; height: 4px; }
.files td { height: 21px; padding: 0 0 0 6px; white-space: nowrap; overflow: hidden; }
.files td:first-child { padding-left: 4px; color: #111; }
.files td:last-child { text-align: right; padding-right: 4px; border-right: 4px solid transparent; background-clip: padding-box; }
.selected td { background-color: #d9d9d9; }
.name { display: flex; align-items: center; gap: 4px; }

.hscroll { display: flex; height: 15px; flex: none; margin-bottom: 3px; background: #f2f2f2; color: #333; }
.hscroll button { width: 17px; display: grid; place-items: center; }
.hscroll .thumb { flex: 1; background: #cdcdcd; }

.status { height: 21px; flex: none; display: flex; gap: 22px; align-items: center; padding: 0 4px 1px 14px; color: #333; }
.views { margin-left: auto; display: flex; align-self: stretch; }
.view { width: 22px; height: 20px; display: grid; place-items: center; }
.view.on { background: #cce8f4; border: 1px solid #3a9fc4; }

/* Taskbar */
.taskbar { display: flex; height: 30px; color: #fff; }
.taskbar button { display: flex; align-items: center; justify-content: center; }
.taskbar .t-icon { width: 36px; }
.taskbar .t-edge { width: 42px; }
.taskbar .task { width: 152px; margin: 0 6px 0 2px; justify-content: flex-start; gap: 4px; padding: 2px 0 0 4px; border-bottom: 2px solid #76b9ed; white-space: nowrap; }
.tray { margin-left: auto; display: flex; align-items: center; gap: 8px; padding-right: 13px; }
.tray time { margin-left: 3px; }
.tray .notify { width: 40px; height: 30px; background: rgba(255, 255, 255, .1); margin-left: -2px; }

.tooltip { position: absolute; right: 0; bottom: 30px; padding: 1px 6px; border: 1px solid #767676; background: #fff; color: #575757; }
.cursor { position: absolute; right: -6px; bottom: -1px; width: 12px; height: 19px; }
```
